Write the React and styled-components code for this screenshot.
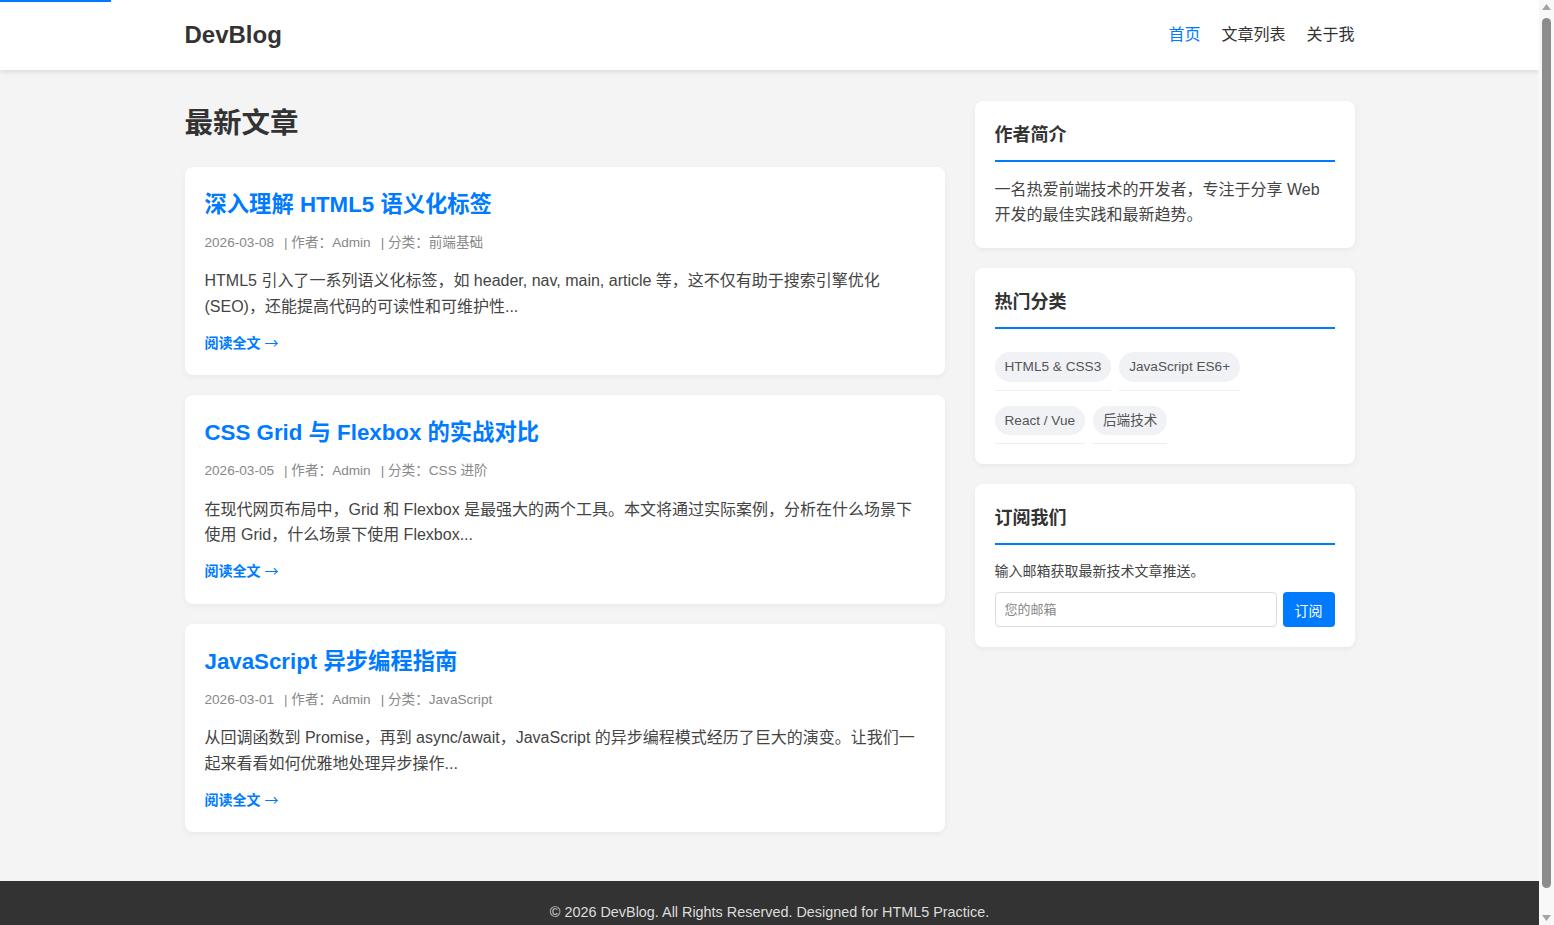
import React from "react";
import styled, { createGlobalStyle } from "styled-components";

const GlobalStyle = createGlobalStyle`
  * { box-sizing: border-box; }
  html::-webkit-scrollbar { display: none; }
  html { scrollbar-width: none; }
  body {
    margin: 0 15px 0 0;
    background: #f4f4f4;
    color: #333;
    font-family: "Liberation Sans", Arial, "Noto Sans CJK SC", sans-serif;
    line-height: 1.6;
  }
  a { text-decoration: none; }
`;

const ProgressBar = styled.div`
  position: fixed;
  top: 0;
  left: 0;
  height: 2px;
  background: #007bff;
  z-index: 10;
`;

const ScrollTrack = styled.div`
  position: fixed;
  top: 0;
  right: 0;
  width: 15px;
  height: 100vh;
  background: #f8f8f8;
  z-index: 20;
`;

const ScrollThumb = styled.div`
  position: absolute;
  left: 3px;
  width: 9px;
  border-radius: 5px;
  background: #8c8c8c;
`;

const ScrollArrow = styled.svg`
  position: absolute;
  left: 3px;
  width: 9px;
  height: 6px;
`;

const Header = styled.header`
  background: #fff;
  box-shadow: 0 2px 5px rgba(0, 0, 0, 0.1);
`;

const Container = styled.div`
  width: 1170px;
  margin: 0 auto;
`;

const HeaderInner = styled(Container)`
  height: 70px;
  display: flex;
  align-items: center;
  justify-content: space-between;
`;

const Logo = styled.div`
  font-size: 24px;
  font-weight: bold;
  color: #333;
`;

const Nav = styled.nav`
  display: flex;
  gap: 21px;
`;

const NavLink = styled.a`
  font-size: 16px;
  color: ${(p) => (p.$active ? "#007bff" : "#333")};
`;

const Layout = styled(Container)`
  display: grid;
  grid-template-columns: 2fr 1fr;
  gap: 30px;
  padding: 31px 0 49px;
  align-items: start;
`;

const Main = styled.main``;

const PageTitle = styled.h2`
  margin: 0 0 20px;
  font-size: 28.5px;
  line-height: 1.6;
  color: #333;
`;

const ArticleList = styled.div`
  display: flex;
  flex-direction: column;
  gap: 20px;
`;

const Card = styled.article`
  background: #fff;
  border-radius: 8px;
  padding: 20px;
  box-shadow: 0 2px 6px rgba(0, 0, 0, 0.05);
`;

const ArticleTitle = styled.h3`
  margin: 0 0 10px;
  font-size: 22.3px;
  line-height: 35px;
  color: #007bff;
`;

const Meta = styled.div`
  font-size: 13.6px;
  color: #888;
  margin-bottom: 15px;
`;

const MetaItem = styled.span`
  margin-right: 10px;
`;

const Excerpt = styled.p`
  margin: 0 0 10px;
  font-size: 16px;
  color: #444;
`;

const ReadMore = styled.a`
  font-size: 14px;
  font-weight: bold;
  color: #007bff;
`;

const Arrow = styled.span`
  font-family: "Noto Sans CJK SC", sans-serif;
  font-weight: normal;
  line-height: 1;
  margin-left: 4px;
`;

const Sidebar = styled.aside`
  display: flex;
  flex-direction: column;
  gap: 20px;
`;

const Widget = styled.section`
  background: #fff;
  border-radius: 8px;
  padding: 20px;
  box-shadow: 0 2px 6px rgba(0, 0, 0, 0.05);
`;

const WidgetTitle = styled.h3`
  margin: 0 0 15px;
  padding-bottom: 10px;
  border-bottom: 2px solid #007bff;
  font-size: 18px;
  line-height: 1.6;
  color: #333;
`;

const WidgetText = styled.p`
  margin: 0;
  font-size: ${(p) => p.$size || "16px"};
  color: #444;
`;

const TagList = styled.ul`
  list-style: none;
  margin: 0;
  padding: 0;
  display: flex;
  flex-wrap: wrap;
  column-gap: 8px;
  row-gap: 7px;
`;

const TagItem = styled.li`
  padding: 8px 0;
  border-bottom: 1px solid #eee;
`;

const Tag = styled.a`
  display: block;
  padding: 4px 10px;
  border-radius: 15px;
  background: #f0f2f5;
  color: #555;
  font-size: 13.6px;
`;

const SubscribeForm = styled.form`
  display: flex;
  gap: 6px;
  margin-top: 10px;
`;

const EmailInput = styled.input`
  flex: 1;
  height: 35px;
  padding: 0 9px;
  border: 1px solid #ddd;
  border-radius: 4px;
  font-family: inherit;
  font-size: 13px;
  color: #333;
  &::placeholder { color: #888; }
`;

const SubscribeButton = styled.button`
  height: 35px;
  padding: 0 12px;
  border: none;
  border-radius: 4px;
  background: #007bff;
  color: #fff;
  font-family: inherit;
  font-size: 14px;
`;

const Footer = styled.footer`
  background: #333;
  color: #ddd;
  text-align: center;
  padding: 20px 0;
  font-size: 14.4px;
`;

const articles = [
  {
    title: "深入理解 HTML5 语义化标签",
    date: "2026-03-08",
    category: "前端基础",
    excerpt:
      "HTML5 引入了一系列语义化标签，如 header, nav, main, article 等，这不仅有助于搜索引擎优化 (SEO)，还能提高代码的可读性和可维护性...",
  },
  {
    title: "CSS Grid 与 Flexbox 的实战对比",
    date: "2026-03-05",
    category: "CSS 进阶",
    excerpt:
      "在现代网页布局中，Grid 和 Flexbox 是最强大的两个工具。本文将通过实际案例，分析在什么场景下使用 Grid，什么场景下使用 Flexbox...",
  },
  {
    title: "JavaScript 异步编程指南",
    date: "2026-03-01",
    category: "JavaScript",
    excerpt:
      "从回调函数到 Promise，再到 async/await，JavaScript 的异步编程模式经历了巨大的演变。让我们一起来看看如何优雅地处理异步操作...",
  },
];

const tags = ["HTML5 & CSS3", "JavaScript ES6+", "React / Vue", "后端技术"];

export default function App() {
  return (
    <>
      <GlobalStyle />
      <ProgressBar style={{ width: "111px" }} />
      <ScrollTrack>
        <ScrollArrow style={{ top: "4px" }} viewBox="0 0 9 6">
          <path d="M4.5 0 L9 6 L0 6 Z" fill="#a3a3a3" />
        </ScrollArrow>
        <ScrollThumb style={{ top: "18px", height: "870px" }} />
        <ScrollArrow style={{ bottom: "4px" }} viewBox="0 0 9 6">
          <path d="M0 0 L9 0 L4.5 6 Z" fill="#a3a3a3" />
        </ScrollArrow>
      </ScrollTrack>
      <Header>
        <HeaderInner>
          <Logo>DevBlog</Logo>
          <Nav>
            <NavLink $active href="#">首页</NavLink>
            <NavLink href="#">文章列表</NavLink>
            <NavLink href="#">关于我</NavLink>
          </Nav>
        </HeaderInner>
      </Header>
      <Layout>
        <Main>
          <PageTitle>最新文章</PageTitle>
          <ArticleList>
            {articles.map((a) => (
              <Card key={a.title}>
                <ArticleTitle>{a.title}</ArticleTitle>
                <Meta>
                  <MetaItem>{a.date}</MetaItem>
                  <MetaItem>| 作者：Admin</MetaItem>
                  <MetaItem>| 分类：{a.category}</MetaItem>
                </Meta>
                <Excerpt>{a.excerpt}</Excerpt>
                <ReadMore href="#">
                  阅读全文<Arrow>→</Arrow>
                </ReadMore>
              </Card>
            ))}
          </ArticleList>
        </Main>
        <Sidebar>
          <Widget>
            <WidgetTitle>作者简介</WidgetTitle>
            <WidgetText>
              一名热爱前端技术的开发者，专注于分享 Web 开发的最佳实践和最新趋势。
            </WidgetText>
          </Widget>
          <Widget>
            <WidgetTitle>热门分类</WidgetTitle>
            <TagList>
              {tags.map((t) => (
                <TagItem key={t}>
                  <Tag href="#">{t}</Tag>
                </TagItem>
              ))}
            </TagList>
          </Widget>
          <Widget>
            <WidgetTitle>订阅我们</WidgetTitle>
            <WidgetText $size="14px">输入邮箱获取最新技术文章推送。</WidgetText>
            <SubscribeForm onSubmit={(e) => e.preventDefault()}>
              <EmailInput type="email" placeholder="您的邮箱" />
              <SubscribeButton type="submit">订阅</SubscribeButton>
            </SubscribeForm>
          </Widget>
        </Sidebar>
      </Layout>
      <Footer>© 2026 DevBlog. All Rights Reserved. Designed for HTML5 Practice.</Footer>
    </>
  );
}
